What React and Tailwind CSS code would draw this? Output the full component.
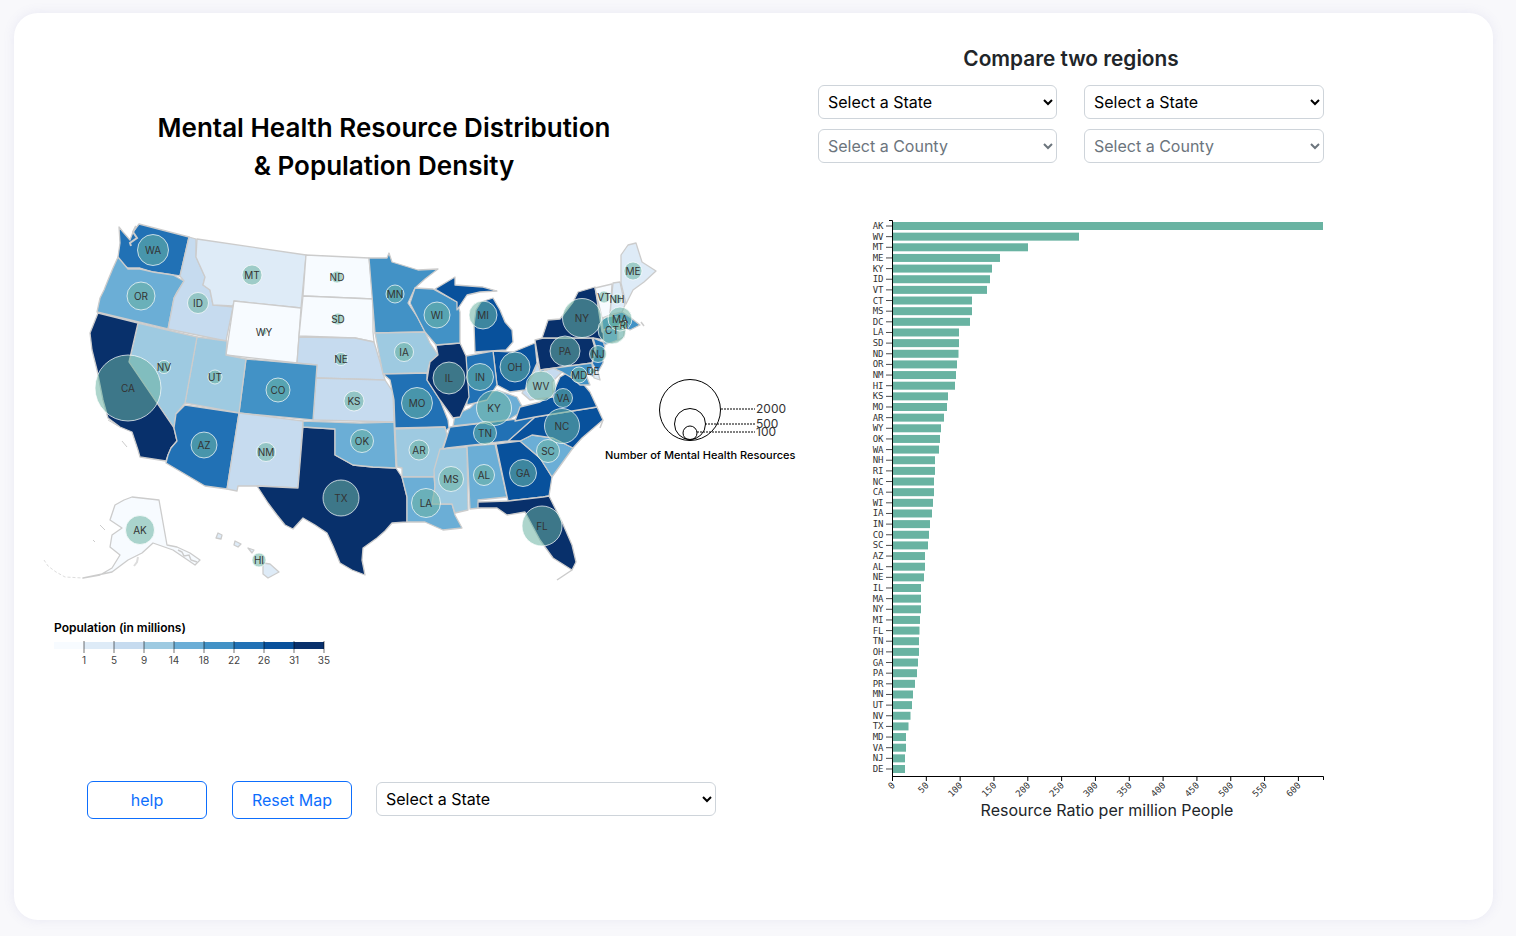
const blues = ["#f7fbff", "#deebf7", "#c6dbef", "#9ecae1", "#6baed6", "#4292c6", "#2171b5", "#08519c", "#08306b"];

// state shapes, in page pixels: [points, colour index]
const states = [
  ["119,227 123,232 130,240 133,232 139,224 189,237 180,276 153,272 140,268 128,268 120,263 118,257 120,243", 6],
  ["118,257 128,269 140,269 153,272 173,275 184,281 177,292 174,298 168,329 97,312 100,298 104,290 108,280 113,268", 4],
  ["189,237 196,239 196,257 205,277 203,285 210,290 213,305 225,306 233,307 226,341 168,329 174,298 184,281 180,276", 2],
  ["197,239 306,255 301,308 234,301 233,306 213,305 210,290 203,285 205,277 196,257", 1],
  ["234,301 301,308 297,363 226,355", 0],
  ["306,255 369,258 373,299 303,296", 0],
  ["303,296 373,299 373,332 374,342 355,338 299,336", 0],
  ["299,337 355,338 374,342 380,362 385,380 316,378 317,365 297,363", 2],
  ["316,378 385,380 393,392 394,422 313,420", 2],
  ["246,359 317,365 313,420 239,413", 5],
  ["197,337 227,341 226,355 246,359 239,413 185,403", 3],
  ["138,323 197,337 185,403 176,414 174,428 129,362", 3],
  ["98,313 138,323 129,362 174,428 177,441 171,448 168,455 166,461 140,457 138,450 132,432 120,427 108,418 103,400 97,370 92,350 90,333", 8],
  ["185,405 239,413 227,489 205,486 166,463 168,455 171,448 177,441 174,428 176,414", 6],
  ["239,413 303,421 298,488 257,486 238,486 237,491 227,489", 2],
  ["303,427 335,429 335,455 353,465 373,467 396,468 402,477 407,497 407,522 392,523 385,531 377,538 363,548 362,560 365,575 352,570 340,563 333,546 327,533 315,525 303,518 293,529 285,525 277,515 268,503 257,486 298,488", 8],
  ["303,421 360,423 394,422 396,468 373,467 353,465 335,455 335,429 303,427", 4],
  ["369,258 387,258 389,253 392,262 405,266 418,270 438,269 425,279 415,288 408,303 418,318 425,332 375,333", 5],
  ["375,333 425,332 430,343 438,355 430,362 427,373 383,374", 3],
  ["383,374 427,373 427,380 440,400 448,420 449,428 443,433 445,427 395,428 394,400 390,380", 6],
  ["395,429 445,427 447,435 435,470 434,477 402,477 402,468 397,467", 3],
  ["402,477 434,477 435,487 432,504 452,504 455,515 462,528 443,530 425,522 407,522 407,497", 4],
  ["440,449 467,447 468,510 455,513 452,504 432,504 435,487 434,470", 3],
  ["467,446 495,444 507,497 478,500 480,508 470,509", 4],
  ["496,444 520,441 540,458 552,477 549,496 543,497 508,501", 7],
  ["478,502 508,501 543,497 549,496 562,522 572,545 576,562 572,570 553,558 540,540 525,512 507,515 497,508 478,508", 8],
  ["520,441 532,435 553,438 573,448 552,477 540,458", 4],
  ["508,441 535,417 597,407 603,420 582,438 573,448 553,438 532,435 520,441", 7],
  ["450,427 535,417 508,441 447,448 443,449", 6],
  ["453,426 455,415 470,408 478,400 497,390 517,397 524,410 510,419 500,421", 4],
  ["515,421 520,407 540,402 553,393 560,377 567,373 580,380 590,392 597,407 535,417", 7],
  ["522,393 527,385 533,375 537,363 541,372 553,368 562,372 552,382 553,397 545,398 530,400", 2],
  ["493,351 513,352 535,343 537,363 525,390 510,392 497,385", 7],
  ["466,356 493,351 497,385 487,400 467,405", 6],
  ["436,345 460,343 466,356 469,397 460,417 453,418 440,400 427,380 430,362 438,355", 8],
  ["415,288 433,289 457,302 460,312 460,343 436,345 425,332 410,303", 5],
  ["435,289 450,280 455,277 455,285 483,287 497,291 480,292 467,295 457,310 457,302", 7],
  ["475,352 474,325 476,310 481,302 493,298 500,310 505,322 512,330 513,342 506,350", 7],
  ["535,340 543,338 592,338 595,348 592,363 540,370", 8],
  ["542,338 548,320 560,319 573,302 578,292 595,287 602,332 612,336 604,340 593,338", 8],
  ["593,338 605,343 603,363 598,372 592,365 596,348", 6],
  ["540,370 592,363 594,377 585,372 590,385 580,385 572,378 562,372 553,368 541,372", 5],
  ["592,363 598,372 600,380 594,378", 1],
  ["595,288 612,284 610,315 602,318", 0],
  ["613,283 620,282 625,305 622,312 610,315", 1],
  ["621,283 621,255 628,245 636,243 642,262 656,271 644,282 633,290 626,304", 1],
  ["602,319 622,312 631,318 640,325 630,330 620,325 603,330", 5],
  ["603,330 618,327 618,340 604,345", 4],
  ["618,327 624,326 624,337 618,340", 1],
  ["115,505 124,500 132,497 159,500 167,545 177,547 190,553 200,560 195,565 173,550 153,543 142,553 128,560 112,572 83,578 100,575 112,568 120,555 110,547 112,535 122,528 110,520", 0],
  ["218,533 222,535 221,539 216,538", 1],
  ["235,541 241,544 238,547 234,545", 1],
  ["248,548 254,550 252,553", 1],
  ["263,563 270,564 279,572 268,578 263,574", 1],
];

const bubbles = [
  ["WA", 153, 250, 15.5], ["OR", 141, 296, 14], ["ID", 198, 303, 10.5], ["MT", 252, 275, 10], ["ND", 337, 277, 6],
  ["SD", 338, 319, 6], ["WY", 264, 332, 3], ["NE", 341, 359, 6.5], ["KS", 354, 401, 10], ["CO", 278, 390, 12],
  ["UT", 215, 377, 7], ["NV", 164, 367, 6.5], ["CA", 128, 388, 33], ["AZ", 204, 445, 13], ["NM", 266, 452, 9.5],
  ["TX", 341, 498, 18], ["OK", 362, 441, 11.5], ["MN", 395, 294, 9], ["WI", 437, 315, 13], ["MI", 483, 315, 14],
  ["IA", 404, 352, 9.5], ["IL", 449, 378, 16], ["IN", 480, 377, 13.5], ["OH", 515, 367, 15], ["KY", 494, 408, 17.5],
  ["WV", 541, 386, 15], ["VA", 563, 398, 9.5], ["PA", 565, 351, 15], ["NY", 582, 318, 19.5], ["NJ", 598, 354, 8.5],
  ["MD", 579, 375, 8], ["DE", 593, 371, 3], ["CT", 612, 330, 14], ["MA", 620, 319, 12], ["RI", 624, 325, 4],
  ["NH", 617, 299, 5], ["VT", 604, 297, 6], ["ME", 633, 271, 9], ["MO", 417, 403, 15.5], ["AR", 419, 450, 10],
  ["MS", 451, 479, 12.5], ["LA", 426, 503, 14.5], ["AL", 484, 475, 10.5], ["TN", 485, 433, 11.5], ["NC", 562, 426, 17.5],
  ["SC", 548, 451, 11.5], ["GA", 523, 473, 13.5], ["FL", 542, 526, 20], ["AK", 140, 530, 14.5], ["HI", 259, 560, 7],
];

// bar ends, in page pixels
const bars = [
  ["AK", 1323], ["WV", 1079], ["MT", 1028], ["ME", 1000], ["KY", 992], ["ID", 990], ["VT", 987], ["CT", 972], ["MS", 972],
  ["DC", 970], ["LA", 959], ["SD", 959], ["ND", 958.5], ["OR", 957], ["NM", 956], ["HI", 955], ["KS", 948], ["MO", 947],
  ["AR", 944], ["WY", 941], ["OK", 940], ["WA", 939], ["NH", 935], ["RI", 935], ["NC", 934], ["CA", 934], ["WI", 933],
  ["IA", 932], ["IN", 930], ["CO", 929], ["SC", 928], ["AZ", 925], ["AL", 925], ["NE", 924], ["IL", 921], ["MA", 921],
  ["NY", 921], ["MI", 920], ["FL", 919.5], ["TN", 919], ["OH", 919], ["GA", 918], ["PA", 917], ["PR", 915], ["MN", 913],
  ["UT", 912], ["NV", 910.5], ["TX", 908.5], ["MD", 906], ["VA", 906], ["NJ", 905], ["DE", 905],
];

const legendTicks = ["1", "5", "9", "14", "18", "22", "26", "31", "35"];
const xTicks = [0, 50, 100, 150, 200, 250, 300, 350, 400, 450, 500, 550, 600];

function UsMap() {
  return (
    <svg width="770" height="460" viewBox="30 215 770 460" className="block ml-4 mt-[30px]">
      {states.map(([points, c], i) => (
        <polygon key={i} points={points} fill={blues[c]} stroke="#ccc" strokeWidth="1.3" strokeLinejoin="round" />
      ))}
      {/* puget sound, aleutians and other coast scraps */}
      <path d="M136 226 L133 232 L137 238 L130 243 L131 246" fill="none" stroke="#ccc" strokeWidth="2" />
      <path d="M44 560 L48 566 L56 572 L65 577 L83 578" fill="none" stroke="#ddd" strokeWidth="1" strokeDasharray="3 2" />
      <path d="M100 525 L105 530 M93 540 L95 542 M108 420 L118 426 M122 441 L127 447" fill="none" stroke="#ccc" strokeWidth="1" />
      <path d="M178 550 L182 552 L184 556 L189 555 L191 560 L197 562" fill="none" stroke="#ccc" strokeWidth="1.5" />
      <path d="M138 557 L137 562 L134 566" fill="none" stroke="#ddd" strokeWidth="2" />
      <path d="M603 420 L600 428 M641 322 L644 326 M572 570 L557 580" fill="none" stroke="#ccc" strokeWidth="1.5" />

      {bubbles.map(([name, x, y, r]) => (
        <circle key={name} cx={x} cy={y} r={r} fill="#69b3a2" fillOpacity="0.55" stroke="#fff" strokeOpacity="0.7" strokeWidth="1" />
      ))}
      {bubbles.map(([name, x, y]) => (
        <text key={name} x={x} y={y + 3.5} textAnchor="middle" fontSize="10" fill="#333">
          {name}
        </text>
      ))}

      {/* size legend */}
      <g fill="none" stroke="#000">
        <circle cx="690" cy="410" r="30.5" />
        <circle cx="690" cy="424" r="15.5" />
        <circle cx="690" cy="433" r="7" />
        <path d="M721 409 H755 M705 424 H755 M697 432 H755" strokeDasharray="2 1" />
      </g>
      <g fontSize="12" fill="#333">
        <text x="756" y="413">2000</text>
        <text x="756" y="428">500</text>
        <text x="756" y="436">100</text>
      </g>
      <text x="605" y="459" fontSize="11" fontWeight="500" fill="#000">Number of Mental Health Resources</text>

      {/* population legend */}
      <text x="54" y="632" fontSize="12" fontWeight="600" fill="#000">Population (in millions)</text>
      {blues.map((c, i) => (
        <rect key={c} x={54 + i * 30} y="642" width="30" height="7" fill={c} />
      ))}
      {legendTicks.map((t, i) => (
        <g key={t}>
          <line x1={84 + i * 30} x2={84 + i * 30} y1="641" y2="653" stroke="#000" strokeOpacity="0.55" />
          <text x={84 + i * 30} y="664" textAnchor="middle" fontSize="10" fill="#444">{t}</text>
        </g>
      ))}
    </svg>
  );
}

function BarChart() {
  return (
    <svg width="480" height="620" viewBox="860 215 480 620" className="block ml-[60px] mt-[52px]">
      {bars.map(([name, end], i) => {
        const y = 226 + i * 10.647;
        return (
          <g key={name}>
            <rect x="892" y={y - 4} width={end - 892} height="8" fill="#69b3a2" />
            <line x1="886" x2="892" y1={y} y2={y} stroke="#000" strokeOpacity="0.7" />
            <text x="883.5" y={y + 3} textAnchor="end" fontSize="9" fontFamily="'DejaVu Sans Mono', monospace" fill="#333">
              {name}
            </text>
          </g>
        );
      })}
      <path d="M889 220.5 H892.5 V776.5 H1323.5 V780" fill="none" stroke="#000" />
      {xTicks.map((t) => {
        const x = 892.5 + t * 0.6765;
        return (
          <g key={t}>
            <line x1={x} x2={x} y1="776" y2="781" stroke="#000" />
            <text
              x={x + 3}
              y="786"
              textAnchor="end"
              fontSize="9"
              fontFamily="'DejaVu Sans Mono', monospace"
              fill="#333"
              transform={`rotate(-45 ${x + 3} 786)`}
            >
              {t}
            </text>
          </g>
        );
      })}
      <text x="1107" y="816" textAnchor="middle" fontSize="16" fill="#212529">Resource Ratio per million People</text>
    </svg>
  );
}

export default function App() {
  return (
    <div className="h-[936px] overflow-hidden bg-[#f8f8fb] pt-[13px] pl-[14px] pr-[23px] font-[Inter,sans-serif] text-[#212529]">
      <div className="flex h-[907px] rounded-3xl bg-white shadow-[0_0_12px_rgba(120,120,190,0.12)]">
        <div className="w-[786px] shrink-0">
          <h1 className="mt-[96px] w-[740px] text-center text-[26px] font-semibold leading-[38px] text-black">
            Mental Health Resource Distribution
            <br />
            &amp; Population Density
          </h1>
          <UsMap />
          <div className="mt-[106px] ml-[73px] flex items-start">
            <button className="h-[38px] w-[120px] rounded-md border border-[#0d6efd] text-[#0d6efd]">help</button>
            <button className="ml-[25px] h-[38px] w-[120px] rounded-md border border-[#0d6efd] text-[#0d6efd]">Reset Map</button>
            <select className="ml-6 mt-px h-[34px] w-[340px] rounded-md border border-[#ced4da] bg-white pl-[5px] pr-[6px] text-black">
              <option>Select a State</option>
            </select>
          </div>
        </div>
        <div className="w-[540px] shrink-0">
          <div className="ml-[18px] w-[506px]">
            <h2 className="mt-[31px] text-center text-[20.8px] font-semibold leading-[30px]">Compare two regions</h2>
            <div className="mt-[11px] grid grid-cols-[239px_240px] gap-x-[27px] gap-y-[10px]">
              <select className="h-[34px] rounded-md border border-[#ced4da] bg-white pl-[5px] pr-[6px] text-black">
                <option>Select a State</option>
              </select>
              <select className="h-[34px] rounded-md border border-[#ced4da] bg-white pl-[5px] pr-[6px] text-black">
                <option>Select a State</option>
              </select>
              <select disabled className="h-[34px] rounded-md border border-[#ced4da] bg-white pl-[5px] pr-[6px] text-[#6c757d]">
                <option>Select a County</option>
              </select>
              <select disabled className="h-[34px] rounded-md border border-[#ced4da] bg-white pl-[5px] pr-[6px] text-[#6c757d]">
                <option>Select a County</option>
              </select>
            </div>
          </div>
          <BarChart />
        </div>
      </div>
    </div>
  );
}
